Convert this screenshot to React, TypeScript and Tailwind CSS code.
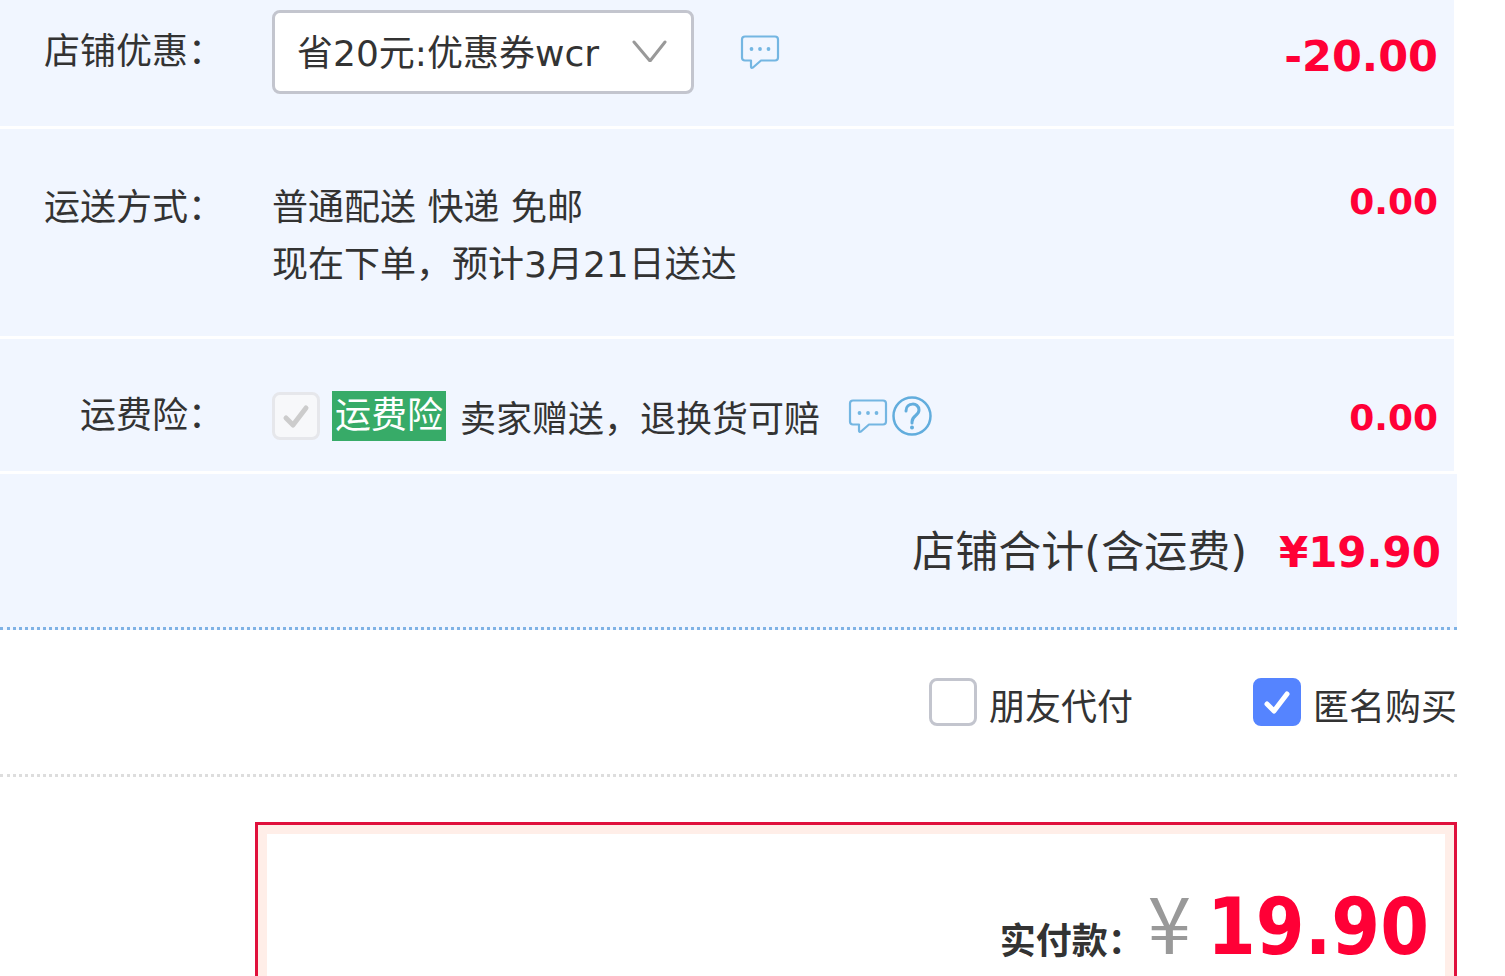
import React, { useId, useState } from "react";

interface RowProps {
  label: React.ReactNode;
  price: string;
  className?: string;
  priceClassName?: string;
  children: React.ReactNode;
}

const Row: React.FC<RowProps> = ({
  label,
  price,
  className = "",
  priceClassName = "text-[36px]",
  children,
}) => {
  return (
    <div
      className={`mr-[3px] flex border-b-[3px] border-white bg-[#f1f6ff] pr-4 ${className}`}>
      <div className="w-56 shrink-0 text-right">{label}</div>
      <div className="ml-12 min-w-0 flex-1">{children}</div>
      <strong
        className={`shrink-0 font-['DejaVu_Sans'] font-bold text-[#ff0036] ${priceClassName}`}>
        {price}
      </strong>
    </div>
  );
};

const MessageIcon = () => (
  <svg
    className="h-9 w-10 shrink-0"
    viewBox="0 0 40 36"
    fill="none"
    stroke="#74b6e2"
    strokeWidth="2.200"
    strokeLinejoin="round">
    <path d="M5 2.500h30q3 0 3 3v18q0 3-3 3H21l-8 7q-2 1-2-1v-6H5q-3 0-3-3v-18q0-3 3-3z" />
    <g fill="#74b6e2" stroke="none">
      <circle cx="11.500" cy="15" r="1.900" />
      <circle cx="20" cy="15" r="1.900" />
      <circle cx="28.500" cy="15" r="1.900" />
    </g>
  </svg>
);

const HelpIcon = () => (
  <svg
    className="h-10 w-10 shrink-0"
    viewBox="0 0 40 40"
    fill="none"
    stroke="#62addd"
    strokeWidth="2.500"
    strokeLinecap="round">
    <circle cx="20" cy="20" r="18.500" />
    <path d="M14 15c0-9 13-9 13-1 0 6-7 5-7 12v1" strokeWidth="3" />
    <circle cx="20" cy="31.500" r="2" fill="#62addd" stroke="none" />
  </svg>
);

interface TickBoxProps {
  checked: boolean;
  disabled?: boolean;
  onChange?: (checked: boolean) => void;
  children: React.ReactNode;
}

const TickBox: React.FC<TickBoxProps> = ({
  checked,
  disabled,
  onChange,
  children,
}) => {
  const id = useId();

  return (
    <div className="flex items-center gap-3">
      <span className="relative h-12 w-12 shrink-0">
        <input
          id={id}
          type="checkbox"
          checked={checked}
          disabled={disabled}
          onChange={(e) => onChange?.(e.target.checked)}
          className="block h-12 w-12 appearance-none rounded-lg border-[3px] border-[#c3c5ce] bg-white checked:border-[#5584ff] checked:bg-[#5584ff] disabled:border-[#e6e7eb] disabled:bg-[#f7f8fa]"
        />
        {checked && (
          <svg
            className={`pointer-events-none absolute inset-0 h-12 w-12 ${
              disabled ? "text-[#cccccc]" : "text-white"
            }`}
            viewBox="0 0 48 48"
            fill="none"
            stroke="currentColor"
            strokeWidth="5"
            strokeLinecap="round"
            strokeLinejoin="round">
            <path d="M14 26l7 7L34 16" />
          </svg>
        )}
      </span>
      <label htmlFor={id}>{children}</label>
    </div>
  );
};

const App: React.FC = () => {
  const [friendPay, setFriendPay] = useState(false);
  const [anonymous, setAnonymous] = useState(true);

  return (
    <main
      lang="zh-CN"
      className="flex min-h-screen flex-col bg-white pr-12 font-['DejaVu_Sans','Noto_Sans_CJK_SC',sans-serif] text-[36px] text-[#333333]">
      <Row
        label={<label htmlFor="coupon">店铺优惠：</label>}
        price="-20.00"
        className="items-center pt-[10px] pb-8 leading-[50px]"
        priceClassName="pt-2 text-[43px]">
        <div className="flex items-center gap-[46px]">
          <div className="relative w-[422px]">
            <select
              id="coupon"
              className="block h-[84px] w-full appearance-none rounded-lg border-[3px] border-[#c3c5ce] bg-white pt-1 pr-20 pl-[22px]">
              <option>省20元:优惠券wcr</option>
            </select>
            <svg
              className="pointer-events-none absolute top-[28px] right-6 h-6 w-10"
              viewBox="0 0 40 24"
              fill="none"
              stroke="#999999"
              strokeWidth="3"
              strokeLinecap="round"
              strokeLinejoin="round">
              <path d="M4 4l16 19L35 4" />
            </svg>
          </div>
          <MessageIcon />
        </div>
      </Row>

      <Row
        label="运送方式："
        price="0.00"
        className="pt-[50px] pb-[43px] leading-[57px]"
        priceClassName="text-[36px] leading-[46px]">
        <p>普通配送 快递 免邮</p>
        <p>现在下单，预计3月21日送达</p>
      </Row>

      <Row
        label="运费险："
        price="0.00"
        className="items-center pt-12 pb-[26px] leading-[50px]"
        priceClassName="pt-1 text-[36px]">
        <div className="flex items-center gap-[14px]">
          <TickBox checked disabled>
            <span className="block bg-[#37ab68] px-[3px] text-white">
              运费险
            </span>
          </TickBox>
          <span className="pt-2">卖家赠送，退换货可赔</span>
          <div className="ml-[14px] flex items-center gap-1">
            <MessageIcon />
            <HelpIcon />
          </div>
        </div>
      </Row>

      <div className="flex items-center justify-end gap-8 border-b-[3px] border-dotted border-[#7fb2e5] bg-[#f1f6ff] pt-[50px] pb-[46px] pr-4 leading-[57px]">
        <span className="text-[43px]">店铺合计(含运费)</span>
        <strong className="font-['DejaVu_Sans'] text-[42px] font-bold text-[#ff0036]">
          ¥19.90
        </strong>
      </div>

      <div className="flex justify-end gap-[120px] border-b-[3px] border-dotted border-[#dddddd] py-[42px] leading-[48px]">
        <TickBox checked={friendPay} onChange={setFriendPay}>
          <span className="block pt-3">朋友代付</span>
        </TickBox>
        <TickBox checked={anonymous} onChange={setAnonymous}>
          <span className="block pt-3">匿名购买</span>
        </TickBox>
      </div>

      <section className="mt-[45px] ml-[255px] flex flex-1 flex-col border-[3px] border-b-0 border-[#e0103c]">
        <div className="flex flex-1 items-baseline justify-end border-[9px] border-b-0 border-[#ffeee8] pt-[46px] pr-4 leading-[80px]">
          <span className="font-bold">实付款：</span>
          <span className="ml-1 font-['Noto_Sans_CJK_SC'] text-[78px] text-[#999999]">
            ¥
          </span>
          <strong className="ml-4 font-['DejaVu_Sans_Condensed','DejaVu_Sans'] text-[78px] font-bold text-[#ff0036]">
            19.90
          </strong>
        </div>
      </section>
    </main>
  );
};

export default App;
